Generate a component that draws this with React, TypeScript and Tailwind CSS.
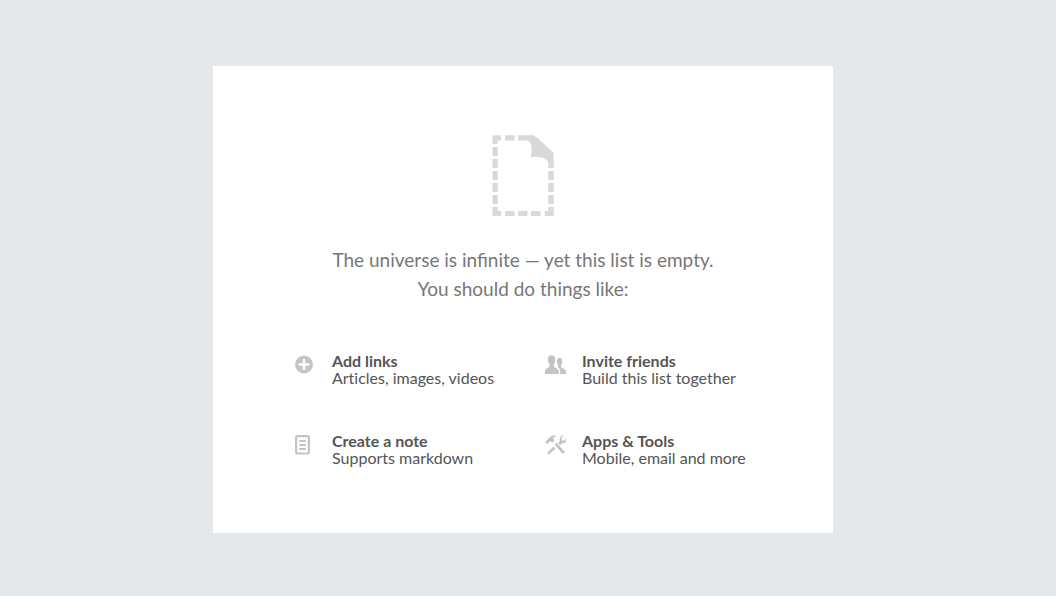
import type { ReactNode } from "react";

type Suggestion = { title: string; detail: string; icon: ReactNode };

function EmptyPageIcon() {
  const rows = [12, 24, 36, 48, 60];
  return (
    <svg width="62" height="81" viewBox="0 0 62 81" fill="#d9d9d9" aria-hidden="true">
      <path d="M.5.3H9v5.200H5.700V9H.5ZM13 .3h9.500v5.200H13Z" />
      <path d="M26 .3h15.500c4 2.200 15.500 13 20.200 17.800V33H56.200v-6c-3-4.800-9.200-5.500-17.700-4.600C40.200 15 40.500 7.500 35.500 5.500H26Z" />
      {rows.map((y) => (
        <rect key={y} x="0.5" y={y} width="5.2" height="9" />
      ))}
      {rows.slice(2).map((y) => (
        <rect key={y} x="56.2" y={y} width="5.5" height="9" />
      ))}
      <path d="M.5 72h5.200v4H9v5H.5ZM13 76h9.500v5H13ZM26 76h9.500v5H26ZM39 76h9.500v5H39ZM61.700 72h-5.500v4h-3.500v5h9Z" />
    </svg>
  );
}

function PlusIcon() {
  return (
    <svg width="18" height="19" viewBox="0 0 18 19" aria-hidden="true">
      <circle cx="9" cy="9.5" r="9" fill="#c4c4c4" />
      <path d="M9 4v11M3.500 9.500h11" stroke="#fff" strokeWidth="2.4" />
    </svg>
  );
}

function NoteIcon() {
  return (
    <svg width="15" height="20" viewBox="0 0 15 20" fill="none" stroke="#c4c4c4" strokeWidth="2.2" aria-hidden="true">
      <rect x="1.1" y="1.1" width="12.8" height="17.4" rx="1.5" />
      <path d="M4.200 6h6.600M4.200 10h6.600M4.200 14h6.600" strokeWidth="1.8" />
    </svg>
  );
}

function FriendsIcon() {
  return (
    <svg width="22" height="19" viewBox="0 0 22 19" fill="#c4c4c4" aria-hidden="true">
      <path d="M6.500.3C9 .3 10.300 1.700 10.300 4.500c0 2.200-.6 3.700-1.500 4.800v2.200c0 1 4.700 1.800 5 4.500V19H0v-3c.2-2.700 4.400-3.500 4.400-4.500V9.300C3.500 8.200 2.900 6.700 2.900 4.500 2.900 1.700 4.200.3 6.500.3Z" />
      <path d="M14.600 2.800c1.700 0 2.700 1.400 2.700 3.500 0 1.700-.5 2.900-1.200 3.700v2.100c0 1 4.600 1.800 4.900 4.200V19h-5.900v-3.300c-.2-1.500-1.300-2.700-2.400-3.600l.4-2.100c-.8-.8-1.200-2-1.200-3.700 0-2.100 1-3.500 2.700-3.500Z" />
    </svg>
  );
}

function ToolsIcon() {
  return (
    <svg width="22" height="20" viewBox="0 0 22 20" fill="#c4c4c4" aria-hidden="true">
      <path d="M0 7.200 4.800 2.200C6.800.3 9.500.1 12 1.300 10 1.500 8.700 2.500 8.300 3.500L9.600 5.700 7.500 7.800 5.500 6.200 4.700 6.300 2.200 9Z" />
      <path d="m9.500 9.400 1.800-1.800 8.500 9.500-2 2Z" />
      <path d="M18.500.5 16.500 3l.5 2.300 2.200.4 2.100-2.400c.6 3-1.300 5.400-4.200 5l-2.100 1.900-1.900-2.100L14.900 6C14.100 3 15.800.3 18.500.5Z" />
      <path d="m8.700 11.400 1.800 2.100-5.700 5.300c-1.500 1.100-3.100-.5-2-1.800Z" />
    </svg>
  );
}

const suggestions: Suggestion[] = [
  { title: "Add links", detail: "Articles, images, videos", icon: <PlusIcon /> },
  { title: "Invite friends", detail: "Build this list together", icon: <FriendsIcon /> },
  { title: "Create a note", detail: "Supports markdown", icon: <NoteIcon /> },
  { title: "Apps & Tools", detail: "Mobile, email and more", icon: <ToolsIcon /> },
];

export default function App() {
  return (
    <div className="min-h-screen bg-[#e4e8eb] pt-[66px] pr-[10px] pb-[63px] font-['Lato',sans-serif]">
      <main className="mx-auto flex max-w-[620px] flex-col items-center bg-white pt-[69px] pb-[67px]">
        <EmptyPageIcon />
        <h1 className="mt-[29px] text-center text-[19px] leading-[29px] font-normal text-[#777]">
          The universe is infinite — yet this list is empty.
          <br />
          You should do things like:
        </h1>
        <ul className="mt-[49px] grid w-full max-w-[456px] grid-cols-[250px_auto] gap-y-[46px] text-base leading-[17px] text-[#555] [font-variant-ligatures:none]">
          {suggestions.map((item) => (
            <li key={item.title} className="flex">
              <span className="w-[37px] shrink-0 pt-[3px]">{item.icon}</span>
              <div>
                <h2 className="font-bold">{item.title}</h2>
                <p>{item.detail}</p>
              </div>
            </li>
          ))}
        </ul>
      </main>
    </div>
  );
}
